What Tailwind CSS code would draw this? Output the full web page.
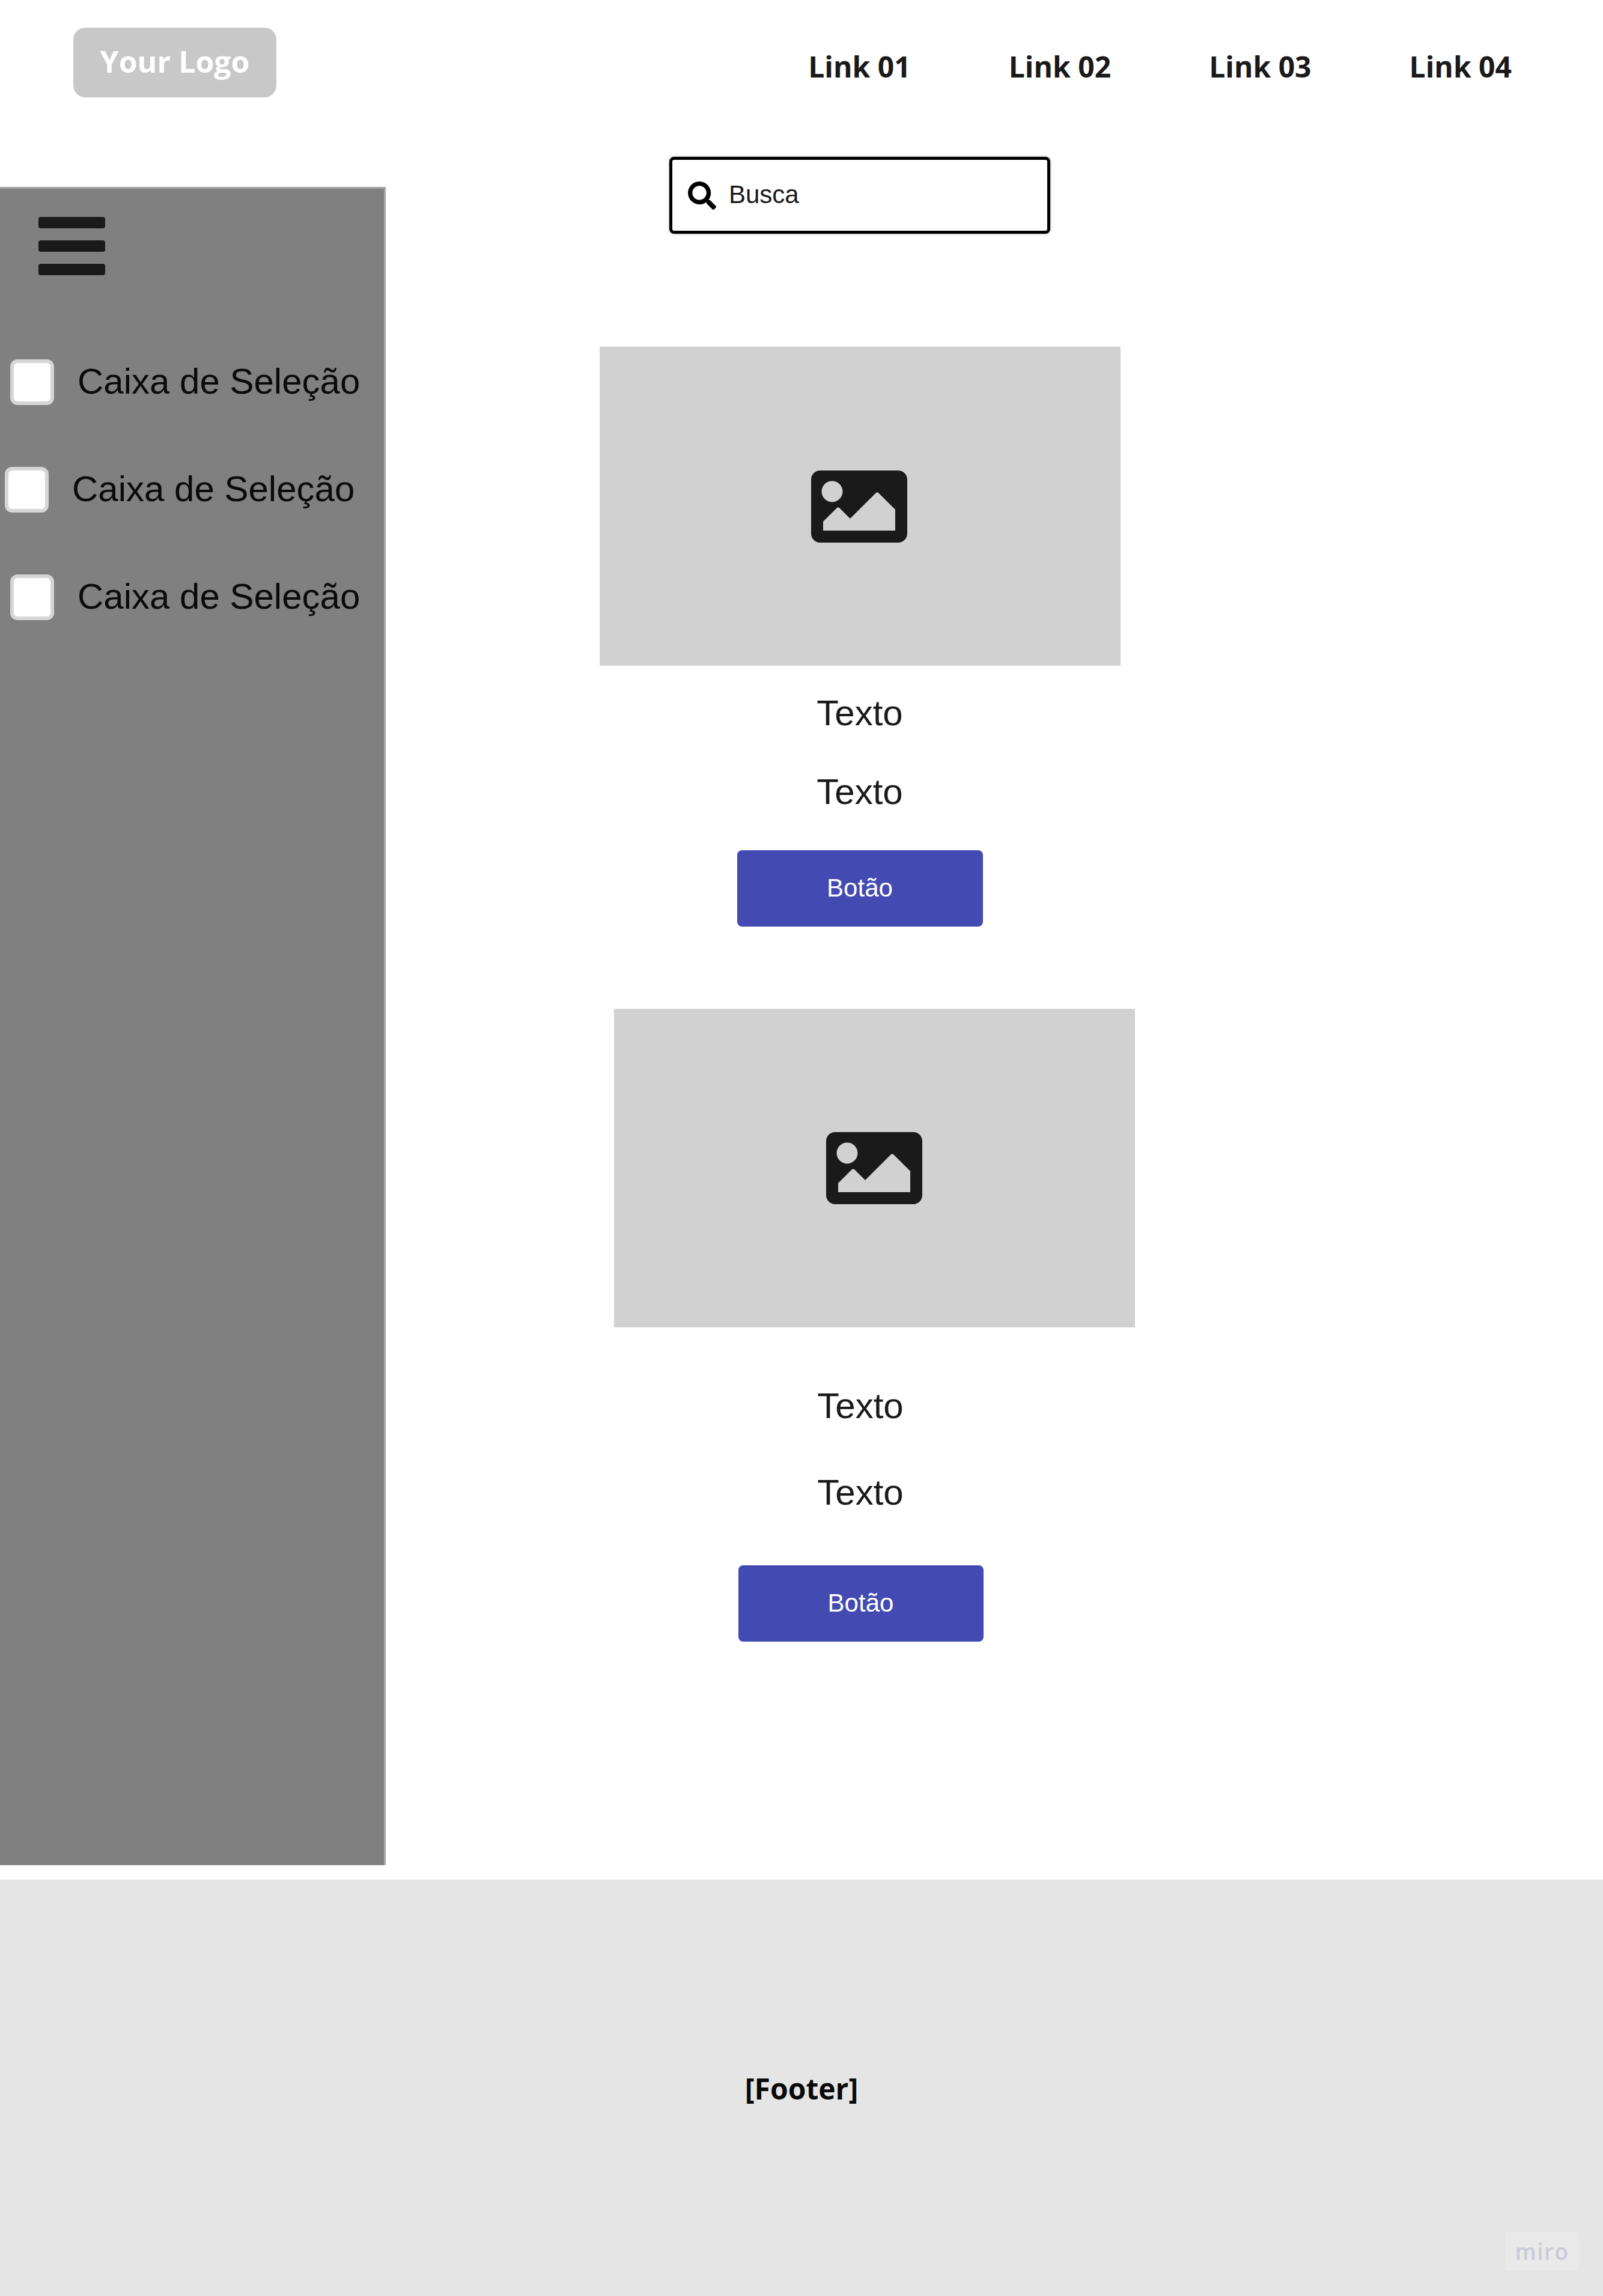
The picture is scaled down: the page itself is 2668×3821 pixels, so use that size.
<!DOCTYPE html>
<html lang="en">
<head>
    <meta charset="UTF-8">
    <title>Wireframe</title>
    <script src="https://cdn.jsdelivr.net/npm/@tailwindcss/browser@4"></script>
</head>
<body class="bg-white font-['Liberation_Sans',sans-serif]">
    <div class="relative w-[2668px] h-[3821px] overflow-hidden">
        <!-- header -->
        <header class="flex items-start h-[261px] pl-[122px] pr-[152px] font-['Open_Sans',sans-serif] font-bold">
            <div class="mt-[46px] flex h-[116px] w-[338px] items-center justify-center rounded-[20px] bg-[#c8c8c8] pb-[4px] text-[50px] text-white">Your Logo</div>
            <nav class="ml-auto mt-[78px] flex gap-[163px] text-[48px] leading-[66px] text-[#1a1a1a]">
                <a href="#">Link 01</a>
                <a href="#">Link 02</a>
                <a href="#">Link 03</a>
                <a href="#">Link 04</a>
            </nav>
        </header>

        <div class="flex h-[2867px]">
            <!-- sidebar -->
            <aside class="mt-[50px] h-[2793px] w-[642px] border-t-[3px] border-r-[3px] border-[#a6a6a6] bg-[#808080] pt-[47px]">
                <div class="ml-[64px] flex w-[111px] flex-col gap-[20px]">
                    <div class="h-[19px] rounded-[4px] bg-[#1a1a1a]"></div>
                    <div class="h-[19px] rounded-[4px] bg-[#1a1a1a]"></div>
                    <div class="h-[19px] rounded-[4px] bg-[#1a1a1a]"></div>
                </div>
                <div class="mt-[140px] flex flex-col gap-[103px] text-[60px] text-[#0a0a0a]">
                    <label class="ml-[17px] flex h-[76px] items-center gap-[39px]">
                        <span class="h-[76px] w-[73px] rounded-[12px] border-[6px] border-[#d6d6d6] bg-white"></span>
                        <span class="-mt-[3px]">Caixa de Seleção</span>
                    </label>
                    <label class="ml-[8px] flex h-[76px] items-center gap-[39px]">
                        <span class="h-[76px] w-[73px] rounded-[12px] border-[6px] border-[#d6d6d6] bg-white"></span>
                        <span class="-mt-[3px]">Caixa de Seleção</span>
                    </label>
                    <label class="ml-[17px] flex h-[76px] items-center gap-[39px]">
                        <span class="h-[76px] w-[73px] rounded-[12px] border-[6px] border-[#d6d6d6] bg-white"></span>
                        <span class="-mt-[3px]">Caixa de Seleção</span>
                    </label>
                </div>
            </aside>

            <!-- main column -->
            <main class="flex w-[1578px] flex-col items-center text-[60px] leading-[64px] text-[#1a1a1a]">
                <div class="flex h-[128px] w-[634px] items-center gap-[21px] rounded-[8px] border-[5px] border-black bg-white pl-[26px] text-[42px] shadow-[0_0_4px_rgba(0,0,0,0.35)]">
                    <svg class="h-[47px] w-[47px] shrink-0" viewBox="0 0 512 512" fill="#000"><path d="M505 442.7L405.3 343c-4.5-4.5-10.6-7-17-7H372c27.6-35.3 44-79.7 44-128C416 93.1 322.9 0 208 0S0 93.1 0 208s93.1 208 208 208c48.3 0 92.7-16.4 128-44v16.3c0 6.4 2.5 12.5 7 17l99.7 99.7c9.4 9.4 24.6 9.4 33.9 0l28.3-28.3c9.4-9.4 9.4-24.6.1-34zM208 336c-70.7 0-128-57.2-128-128 0-70.7 57.2-128 128-128 70.7 0 128 57.2 128 128 0 70.7-57.2 128-128 128z"/></svg>
                    <span class="-mt-[2px]">Busca</span>
                </div>

                <div class="mt-[188px] flex h-[531px] w-[867px] items-center justify-center bg-[#d1d1d1]">
                    <svg class="-ml-[2px] h-[160px] w-[160px]" viewBox="0 0 512 512" fill="#1a1a1a"><path d="M464 448H48c-26.51 0-48-21.49-48-48V112c0-26.51 21.49-48 48-48h416c26.51 0 48 21.49 48 48v288c0 26.51-21.49 48-48 48zM112 120c-30.928 0-56 25.072-56 56s25.072 56 56 56 56-25.072 56-56-25.072-56-56-56zM64 384h384V272l-87.515-87.515c-4.686-4.686-12.284-4.686-16.971 0L208 320l-55.515-55.515c-4.686-4.686-12.284-4.686-16.971 0L64 336v48z"/></svg>
                </div>
                <p class="mt-[47px]">Texto</p>
                <p class="mt-[67px]">Texto</p>
                <button class="mt-[65px] h-[127px] w-[409px] rounded-[8px] bg-[#434bb2] pb-[2px] text-[42px] text-white">Botão</button>

                <div class="ml-[49px] mt-[137px] flex h-[530px] w-[867px] items-center justify-center bg-[#d1d1d1]">
                    <svg class="-ml-[2px] h-[160px] w-[160px]" viewBox="0 0 512 512" fill="#1a1a1a"><path d="M464 448H48c-26.51 0-48-21.49-48-48V112c0-26.51 21.49-48 48-48h416c26.51 0 48 21.49 48 48v288c0 26.51-21.49 48-48 48zM112 120c-30.928 0-56 25.072-56 56s25.072 56 56 56 56-25.072 56-56-25.072-56-56-56zM64 384h384V272l-87.515-87.515c-4.686-4.686-12.284-4.686-16.971 0L208 320l-55.515-55.515c-4.686-4.686-12.284-4.686-16.971 0L64 336v48z"/></svg>
                </div>
                <p class="ml-[2px] mt-[99px]">Texto</p>
                <p class="ml-[2px] mt-[80px]">Texto</p>
                <button class="ml-[3px] mt-[89px] h-[127px] w-[408px] rounded-[8px] bg-[#434bb2] pb-[2px] text-[42px] text-white">Botão</button>
            </main>
        </div>

        <!-- footer -->
        <footer class="flex h-[693px] items-center justify-center bg-[#e5e5e5] font-['Open_Sans',sans-serif] text-[48px] font-bold text-[#0a0a0a]">
            <span class="mt-[2px]">[Footer]</span>
        </footer>

        <!-- miro badge -->
        <div class="absolute bottom-[42px] right-[40px] flex h-[65px] w-[123px] items-center justify-center rounded-[4px] bg-[#e9e9e9] font-['Open_Sans',sans-serif] text-[37px] font-semibold tracking-[1.5px] text-[#cbcbd8]">miro</div>
    </div>
</body>
</html>
